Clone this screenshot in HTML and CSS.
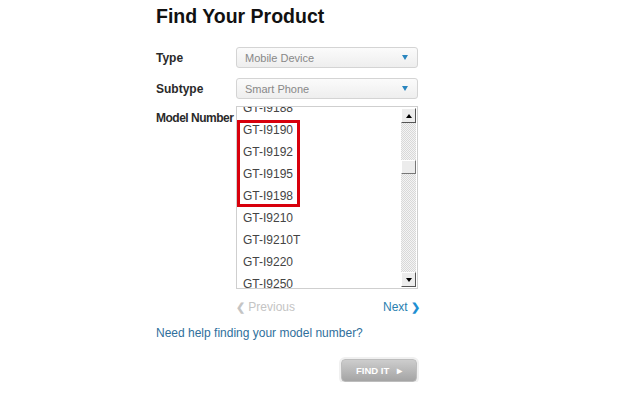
FILE: index.html
```html
<!DOCTYPE html>
<html lang="en">
    <head>
        <meta charset="UTF-8">
        <title>Find Your Product</title>
        <link rel="stylesheet" href="styles.css">
    </head>
    <body>
        <div class="finder">
            <h1 class="title">Find Your Product</h1>
            <div class="row">
                <span class="label">Type</span>
                <div class="select"><span>Mobile Device</span><i class="arrow"></i></div>
            </div>
            <div class="row">
                <span class="label">Subtype</span>
                <div class="select"><span>Smart Phone</span><i class="arrow"></i></div>
            </div>
            <div class="row model">
                <span class="label">Model Number</span>
                <div class="listbox">
                    <div class="items">
                        <ul class="list">
                            <li>GT-I9188</li>
                            <li>GT-I9190</li>
                            <li>GT-I9192</li>
                            <li>GT-I9195</li>
                            <li>GT-I9198</li>
                            <li>GT-I9210</li>
                            <li>GT-I9210T</li>
                            <li>GT-I9220</li>
                            <li>GT-I9250</li>
                        </ul>
                        <div class="mark"></div>
                    </div>
                    <div class="scrollbar">
                        <div class="sbtn up"></div>
                        <div class="track">
                            <div class="thumb"></div>
                        </div>
                        <div class="sbtn down"></div>
                    </div>
                </div>
            </div>
            <div class="pager">
                <span class="prev"><b>&#10094;</b> Previous</span>
                <span class="next">Next <b>&#10095;</b></span>
            </div>
            <a class="help" href="#">Need help finding your model number?</a>
            <div class="actions">
                <button class="find">FIND IT <span>&#9656;</span></button>
            </div>
        </div>
    </body>
</html>
```
FILE: styles.css
```css
body {
    margin: 0;
    background-color: #fff;
    font-family: "Liberation Sans", Arial, sans-serif;
    font-size: 12px;
    color: #333;
}
.finder {
    width: 264px;
    margin-left: 156px;
}
.title {
    margin: 0;
    padding-top: 5px;
    height: 42px;
    font-size: 19.5px;
    font-weight: bold;
    color: #111;
}
.row {
    display: grid;
    grid-template-columns: 80px 182px;
    align-items: center;
    margin-bottom: 10px;
}
.label {
    font-weight: bold;
    color: #2a2a2a;
    white-space: nowrap;
}
.select {
    height: 19px;
    border: 1px solid #d4d4d4;
    border-radius: 3px;
    background: linear-gradient(#fbfbfb, #eeeeee);
    display: flex;
    align-items: center;
    justify-content: space-between;
    padding: 0 9px 0 8px;
    color: #888;
    font-size: 11px;
}
.arrow {
    width: 0;
    height: 0;
    border-left: 3px solid transparent;
    border-right: 3px solid transparent;
    border-top: 5px solid #2a86bf;
}
.model {
    align-items: start;
    margin-top: -3px;
}
.model .label {
    margin-top: 5px;
    letter-spacing: -0.5px;
}
.listbox {
    height: 181px;
    border: 1px solid #cfcfcf;
    display: flex;
    overflow: hidden;
}
.items {
    flex-grow: 1;
    overflow: hidden;
    position: relative;
}
.list {
    list-style: none;
    margin: -10px 0 0 0;
    padding: 0;
}
.list li {
    height: 22px;
    line-height: 22px;
    padding-left: 6px;
    color: #444;
}
/* red highlight drawn over the four models */
.mark {
    position: absolute;
    top: 13px;
    left: 0;
    width: 63px;
    height: 87px;
    border: 3px solid #d8000c;
    box-sizing: border-box;
}
.scrollbar {
    width: 15px;
    display: flex;
    flex-direction: column;
    margin: 1px 1px 1px 0;
    background-color: #ececec;
    background-image: repeating-conic-gradient(#d8d8d8 0 25%, #f4f4f4 0 50%);
    background-size: 2px 2px;
}
.sbtn {
    height: 15px;
    background: #ededed;
    border: 1px solid;
    border-color: #fff #555 #555 #fff;
    box-sizing: border-box;
    display: flex;
    align-items: center;
    justify-content: center;
}
.sbtn:after {
    content: "";
    width: 0;
    height: 0;
    border-left: 3px solid transparent;
    border-right: 3px solid transparent;
}
.up:after {
    border-bottom: 4px solid #000;
}
.down:after {
    border-top: 4px solid #000;
}
.track {
    flex-grow: 1;
}
.thumb {
    height: 14px;
    margin-top: 37px;
    background: #ececec;
    border: 1px solid;
    border-color: #fff #777 #777 #fff;
    box-sizing: border-box;
}
.pager {
    display: flex;
    justify-content: space-between;
    margin: 10px 0 0 80px;
    height: 16px;
    line-height: 16px;
}
.prev {
    color: #c4c4c4;
}
.next {
    color: #2a7fb0;
}
.pager b {
    font-size: 11px;
}
.next b {
    color: #1e8fd2;
}
.help {
    display: block;
    margin-top: 10px;
    color: #2f6f9c;
    text-decoration: none;
    line-height: 16px;
}
.actions {
    display: flex;
    justify-content: flex-end;
    margin-top: 18px;
    padding-right: 3px;
}
.find {
    width: 76px;
    height: 23px;
    border: 1px solid #bdbdbd;
    border-radius: 4px;
    background: linear-gradient(#cdcdcd, #a4a4a4);
    box-shadow: 0 0 0 2px #f0f0f0;
    color: #fff;
    font-family: "Liberation Sans", Arial, sans-serif;
    font-size: 9.5px;
    font-weight: bold;
    padding: 0;
}
.find span {
    margin-left: 5px;
}
```
